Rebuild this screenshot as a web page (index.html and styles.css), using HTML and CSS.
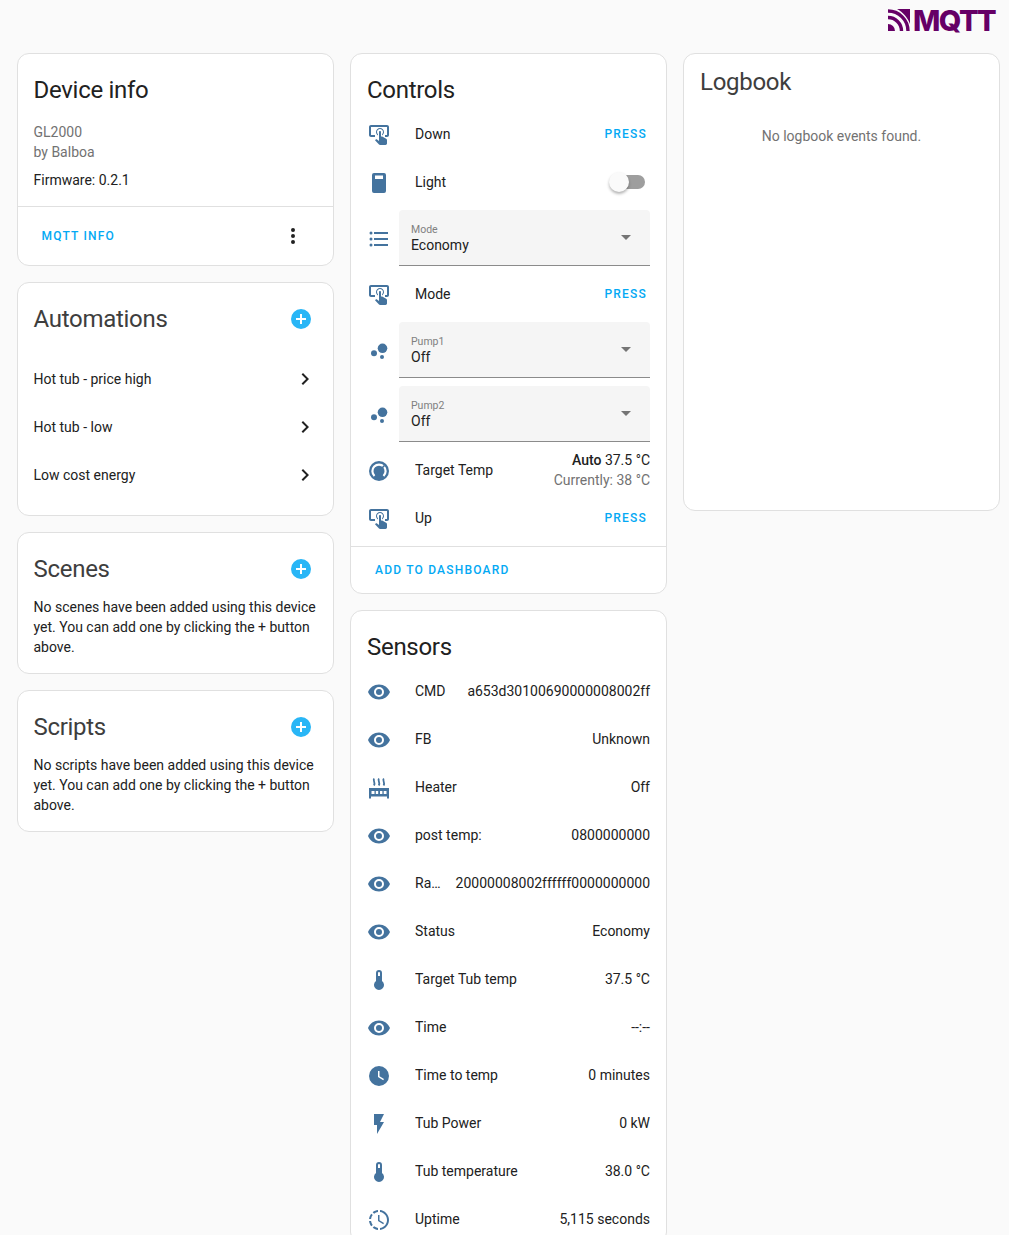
FILE: index.html
```html
<!DOCTYPE html>
<html lang="en">
<head>
<meta charset="utf-8">
<title>Device</title>
<link rel="stylesheet" href="styles.css">
</head>
<body>
<svg class="defs" width="0" height="0" aria-hidden="true">
  <symbol id="i-tap" viewBox="0 0 24 24"><path d="M13 5C15.21 5 17 6.79 17 9C17 10.5 16.2 11.77 15 12.46V11.24C15.61 10.69 16 9.89 16 9C16 7.34 14.66 6 13 6S10 7.34 10 9C10 9.89 10.39 10.69 11 11.24V12.46C9.8 11.77 9 10.5 9 9C9 6.79 10.79 5 13 5M20 20.5C19.97 21.32 19.32 21.97 18.5 22H13C12.62 22 12.26 21.85 12 21.57L8 17.37L8.74 16.6C8.93 16.39 9.2 16.28 9.5 16.28H9.7L12 18V9C12 8.45 12.45 8 13 8S14 8.45 14 9V13.47L15.21 13.6L19.15 15.79C19.68 16.03 20 16.56 20 17.14V20.5M20 2H4C2.9 2 2 2.9 2 4V12C2 13.11 2.9 14 4 14H8V12L4 12L4 4H20L20 12H18V14H20V13.96L20.04 14C21.13 14 22 13.09 22 12V4C22 2.9 21.11 2 20 2Z"/></symbol>
  <symbol id="i-switch" viewBox="0 0 24 24"><path fill-rule="evenodd" d="M7 2H17A2 2 0 0 1 19 4V20A2 2 0 0 1 17 22H7A2 2 0 0 1 5 20V4A2 2 0 0 1 7 2M8 4.5V8H16V4.5Z"/></symbol>
  <symbol id="i-list" viewBox="0 0 24 24"><path d="M7,5H21V7H7V5M7,13V11H21V13H7M4,4.5A1.5,1.5 0 0,1 5.5,6A1.5,1.5 0 0,1 4,7.5A1.5,1.5 0 0,1 2.5,6A1.5,1.5 0 0,1 4,4.5M4,10.5A1.5,1.5 0 0,1 5.5,12A1.5,1.5 0 0,1 4,13.5A1.5,1.5 0 0,1 2.5,12A1.5,1.5 0 0,1 4,10.5M7,19V17H21V19H7M4,16.5A1.5,1.5 0 0,1 5.5,18A1.5,1.5 0 0,1 4,19.5A1.5,1.5 0 0,1 2.5,18A1.5,1.5 0 0,1 4,16.5Z"/></symbol>
  <symbol id="i-bubbles" viewBox="0 0 24 24"><circle cx="15.5" cy="9.3" r="4.8"/><circle cx="7" cy="14.3" r="3"/><circle cx="15" cy="18" r="2"/></symbol>
  <symbol id="i-thermostat" viewBox="0 0 24 24"><circle cx="12" cy="12" r="10"/><path fill="none" stroke="#fff" stroke-width="2.2" d="M7.5 17A6.6 6.6 0 1 1 16.5 17"/><path fill="none" stroke="currentColor" stroke-width="1.6" d="M13 11L17.5 6.5"/></symbol>
  <symbol id="i-eye" viewBox="0 0 24 24"><path d="M12,9A3,3 0 0,0 9,12A3,3 0 0,0 12,15A3,3 0 0,0 15,12A3,3 0 0,0 12,9M12,17A5,5 0 0,1 7,12A5,5 0 0,1 12,7A5,5 0 0,1 17,12A5,5 0 0,1 12,17M12,4.5C7,4.5 2.73,7.61 1,12C2.73,16.39 7,19.5 12,19.5C17,19.5 21.27,16.39 23,12C21.27,7.61 17,4.5 12,4.5Z"/></symbol>
  <symbol id="i-radiator" viewBox="0 0 24 24"><path fill="none" stroke="#44739e" stroke-width="1.8" d="M7.2 2.5C5.4 4.5 8.8 6 7 9.5M12 2.5C10.2 4.5 13.6 6 11.8 9.5M16.8 2.5C15 4.5 18.4 6 16.6 9.5"/><path fill-rule="evenodd" d="M2 12H22V22.5H20V20.5H4V22.5H2ZM4.5 15V18H7.5V15ZM8.8 15V18H11.2V15ZM13 15V18H15.4V15ZM16.7 15V18H19.5V15Z"/></symbol>
  <symbol id="i-thermometer" viewBox="0 0 24 24"><path d="M15 13V5A3 3 0 0 0 9 5V13A5 5 0 1 0 15 13M12 4A1 1 0 0 1 13 5V8H11V5A1 1 0 0 1 12 4Z"/></symbol>
  <symbol id="i-clock" viewBox="0 0 24 24"><path d="M12,2A10,10 0 0,0 2,12A10,10 0 0,0 12,22A10,10 0 0,0 22,12A10,10 0 0,0 12,2M16.2,16.2L11,13V7H12.5V12.2L17,14.9L16.2,16.2Z"/></symbol>
  <symbol id="i-flash" viewBox="0 0 24 24"><path d="M7,2V13H10V22L17,10H13L17,2H7Z"/></symbol>
  <symbol id="i-progress" viewBox="0 0 24 24"><path d="M13,2.03V2.05L13,4.05C17.39,4.59 20.5,8.58 19.96,12.97C19.5,16.61 16.64,19.5 13,19.93V21.93C18.5,21.38 22.5,16.5 21.95,11C21.5,6.25 17.73,2.5 13,2.03M11,2.06C9.05,2.25 7.19,3 5.67,4.26L7.1,5.74C8.22,4.84 9.57,4.26 11,4.06V2.06M4.26,5.67C3,7.19 2.25,9.04 2.05,11H4.05C4.24,9.58 4.8,8.23 5.69,7.1L4.26,5.67M2.06,13C2.26,14.96 3.03,16.81 4.27,18.33L5.69,16.9C4.81,15.77 4.24,14.42 4.06,13H2.06M7.1,18.37L5.67,19.74C7.18,21 9.04,21.79 11,22V20C9.58,19.82 8.23,19.25 7.1,18.37M12.5,7V12.25L17,14.92L16.25,16.15L11,13V7H12.5Z"/></symbol>
  <symbol id="i-chevron" viewBox="0 0 24 24"><path d="M8.59,16.58L13.17,12L8.59,7.41L10,6L16,12L10,18L8.59,16.58Z"/></symbol>
  <symbol id="i-dots" viewBox="0 0 24 24"><path d="M12,16A2,2 0 0,1 14,18A2,2 0 0,1 12,20A2,2 0 0,1 10,18A2,2 0 0,1 12,16M12,10A2,2 0 0,1 14,12A2,2 0 0,1 12,14A2,2 0 0,1 10,12A2,2 0 0,1 12,10M12,4A2,2 0 0,1 14,6A2,2 0 0,1 12,8A2,2 0 0,1 10,6A2,2 0 0,1 12,4Z"/></symbol>
  <symbol id="i-plus" viewBox="0 0 24 24"><path d="M17,13H13V17H11V13H7V11H11V7H13V11H17M12,2A10,10 0 0,0 2,12A10,10 0 0,0 12,22A10,10 0 0,0 22,12A10,10 0 0,0 12,2Z"/></symbol>
  <symbol id="i-caret" viewBox="0 0 24 24"><path d="M7 10L12 15L17 10Z"/></symbol>
</svg>

<header class="topbar">
  <div class="logo">
    <svg class="logo-mark" viewBox="0 0 22 22" aria-hidden="true">
      <path d="M0 15A7 7 0 0 1 7 22H0Z"/>
      <path class="arc" stroke-width="3.4" d="M0 8.5A13.5 13.5 0 0 1 13.5 22"/>
      <path class="arc" stroke-width="3.4" d="M0 2A20 20 0 0 1 20 22"/>
      <path d="M9 0H22V15C19.5 8.5 15 3.2 9 0Z"/>
    </svg>
    <span class="logo-text">MQTT</span>
  </div>
</header>

<main class="columns">
  <div class="column">
    <section class="card">
      <h1 class="card-title">Device info</h1>
      <div class="device-body">
        <div class="muted">GL2000</div>
        <div class="muted">by Balboa</div>
        <div class="firmware">Firmware: 0.2.1</div>
      </div>
      <div class="actions actions-device">
        <a class="link">MQTT INFO</a>
        <svg class="dots"><use href="#i-dots"/></svg>
      </div>
    </section>

    <section class="card automations">
      <div class="title-row">
        <h1 class="card-title soft">Automations</h1>
        <svg class="plus"><use href="#i-plus"/></svg>
      </div>
      <div class="nav-list">
        <div class="nav-row"><span>Hot tub - price high</span><svg class="chevron"><use href="#i-chevron"/></svg></div>
        <div class="nav-row"><span>Hot tub - low</span><svg class="chevron"><use href="#i-chevron"/></svg></div>
        <div class="nav-row"><span>Low cost energy</span><svg class="chevron"><use href="#i-chevron"/></svg></div>
      </div>
    </section>

    <section class="card">
      <div class="title-row">
        <h1 class="card-title soft">Scenes</h1>
        <svg class="plus"><use href="#i-plus"/></svg>
      </div>
      <p class="note">No scenes have been added using this device yet. You can add one by clicking the + button above.</p>
    </section>

    <section class="card">
      <div class="title-row">
        <h1 class="card-title soft">Scripts</h1>
        <svg class="plus"><use href="#i-plus"/></svg>
      </div>
      <p class="note">No scripts have been added using this device yet. You can add one by clicking the + button above.</p>
    </section>
  </div>

  <div class="column">
    <section class="card">
      <h1 class="card-title">Controls</h1>
      <div class="entities">
        <div class="row"><svg class="icon"><use href="#i-tap"/></svg><span class="name">Down</span><a class="press">PRESS</a></div>
        <div class="row"><svg class="icon"><use href="#i-switch"/></svg><span class="name">Light</span><span class="toggle"><span class="track"></span><span class="thumb"></span></span></div>
        <div class="select-row"><svg class="icon"><use href="#i-list"/></svg>
          <div class="select"><div class="select-text"><span class="select-label">Mode</span><span class="select-value">Economy</span></div><svg class="caret"><use href="#i-caret"/></svg></div>
        </div>
        <div class="row"><svg class="icon"><use href="#i-tap"/></svg><span class="name">Mode</span><a class="press">PRESS</a></div>
        <div class="select-row"><svg class="icon"><use href="#i-bubbles"/></svg>
          <div class="select"><div class="select-text"><span class="select-label">Pump1</span><span class="select-value">Off</span></div><svg class="caret"><use href="#i-caret"/></svg></div>
        </div>
        <div class="select-row"><svg class="icon"><use href="#i-bubbles"/></svg>
          <div class="select"><div class="select-text"><span class="select-label">Pump2</span><span class="select-value">Off</span></div><svg class="caret"><use href="#i-caret"/></svg></div>
        </div>
        <div class="row"><svg class="icon"><use href="#i-thermostat"/></svg><span class="name">Target Temp</span>
          <div class="climate"><div><b>Auto</b> 37.5 °C</div><div class="current">Currently: 38 °C</div></div>
        </div>
        <div class="row"><svg class="icon"><use href="#i-tap"/></svg><span class="name">Up</span><a class="press">PRESS</a></div>
      </div>
      <div class="actions actions-controls"><a class="link">ADD TO DASHBOARD</a></div>
    </section>

    <section class="card">
      <h1 class="card-title">Sensors</h1>
      <div class="entities sensors">
        <div class="row"><svg class="icon"><use href="#i-eye"/></svg><span class="name">CMD</span><span class="value">a653d30100690000008002ff</span></div>
        <div class="row"><svg class="icon"><use href="#i-eye"/></svg><span class="name">FB</span><span class="value">Unknown</span></div>
        <div class="row"><svg class="icon"><use href="#i-radiator"/></svg><span class="name">Heater</span><span class="value">Off</span></div>
        <div class="row"><svg class="icon"><use href="#i-eye"/></svg><span class="name">post temp:</span><span class="value">0800000000</span></div>
        <div class="row"><svg class="icon"><use href="#i-eye"/></svg><span class="name">Ra…</span><span class="value">20000008002ffffff0000000000</span></div>
        <div class="row"><svg class="icon"><use href="#i-eye"/></svg><span class="name">Status</span><span class="value">Economy</span></div>
        <div class="row"><svg class="icon"><use href="#i-thermometer"/></svg><span class="name">Target Tub temp</span><span class="value">37.5 °C</span></div>
        <div class="row"><svg class="icon"><use href="#i-eye"/></svg><span class="name">Time</span><span class="value">--:--</span></div>
        <div class="row"><svg class="icon"><use href="#i-clock"/></svg><span class="name">Time to temp</span><span class="value">0 minutes</span></div>
        <div class="row"><svg class="icon"><use href="#i-flash"/></svg><span class="name">Tub Power</span><span class="value">0 kW</span></div>
        <div class="row"><svg class="icon"><use href="#i-thermometer"/></svg><span class="name">Tub temperature</span><span class="value">38.0 °C</span></div>
        <div class="row"><svg class="icon"><use href="#i-progress"/></svg><span class="name">Uptime</span><span class="value">5,115 seconds</span></div>
      </div>
    </section>
  </div>

  <div class="column">
    <section class="card logbook">
      <h1 class="card-title soft">Logbook</h1>
      <p class="empty">No logbook events found.</p>
    </section>
  </div>
</main>
</body>
</html>
```

FILE: styles.css
```css
* { box-sizing: border-box; }
html, body { margin: 0; height: 100%; }
body {
  height: 100vh;
  overflow: hidden;
  background: #fafafa;
  color: #212121;
  font-family: Roboto, "Liberation Sans", sans-serif;
  font-size: 14px;
  line-height: 20px;
}
.defs { position: absolute; }
svg { display: block; fill: currentColor; flex: none; }

.topbar {
  height: 53px;
  display: flex;
  justify-content: flex-end;
  padding: 9px 14px 0 0;
}
.logo { display: flex; align-items: flex-start; height: 26px; color: #660066; gap: 3.5px; }
.logo-mark { width: 22px; height: 22px; }
.logo-mark .arc { fill: none; stroke: #660066; }
.logo-text {
  font-family: Inter, Roboto, sans-serif;
  font-weight: 800;
  font-size: 29px;
  line-height: 22px;
  letter-spacing: -1.6px;
  margin-top: 1px;
}

.columns {
  display: grid;
  grid-template-columns: 317.5px 317px 317px;
  gap: 16px;
  padding-left: 16.5px;
  align-items: start;
}
.column { display: flex; flex-direction: column; gap: 16px; }

.card {
  background: #fff;
  border: 1px solid #e0e0e0;
  border-radius: 12px;
}
.card-title {
  margin: 0;
  padding: 20px 16px 4px;
  font-size: 24px;
  font-weight: 400;
  line-height: 32px;
  letter-spacing: -0.29px;
}
.card-title.soft { color: #3e3e3e; }
.title-row { display: flex; justify-content: space-between; align-items: flex-start; }
.plus { width: 24px; height: 24px; color: #29b6f6; margin: 24px 20px 0 0; }

.device-body { padding: 12px 16px 16px; }
.muted { color: #727272; }
.firmware { margin-top: 8px; }
.actions { border-top: 1px solid #e0e0e0; display: flex; align-items: center; }
.actions-device { height: 59px; justify-content: space-between; padding: 0 28px 0 24px; }
.actions-controls { height: 47px; margin-top: 4px; padding-left: 24px; }
.link, .press {
  color: #03a9f4;
  font-size: 12px;
  font-weight: 500;
  letter-spacing: 1.2px;
}
.dots { width: 24px; height: 24px; }

.automations { padding-bottom: 16px; }
.nav-list { margin-top: 16px; }
.nav-row { height: 48px; display: flex; align-items: center; justify-content: space-between; padding: 0 16px; }
.chevron { width: 24px; height: 24px; }

.note { margin: 8px 16px 16px; }

.entities { padding: 0 16px; }
.row { height: 48px; display: flex; align-items: center; }
.icon { width: 24px; height: 24px; color: #44739e; margin-top: 2px; }
.name { margin-left: 24px; flex: 1; min-width: 0; white-space: nowrap; overflow: hidden; text-overflow: ellipsis; }
.press { padding-right: 3px; }
.value { white-space: nowrap; margin-left: 12px; }

.toggle { position: relative; width: 36px; height: 14px; margin-right: 5px; }
.track { position: absolute; top: 0; right: 0; bottom: 0; left: 2px; border-radius: 7px; background: #9e9e9e; }
.thumb {
  position: absolute;
  left: 0;
  top: -3px;
  width: 20px;
  height: 20px;
  border-radius: 50%;
  background: #fafafa;
  box-shadow: 0 2px 3px rgba(0,0,0,.3);
}

.select-row { display: flex; align-items: center; height: 64px; }
.select {
  flex: 1;
  height: 56px;
  margin-left: 8px;
  background: #f5f5f5;
  border-bottom: 1px solid #8b8b8b;
  border-radius: 4px 4px 0 0;
  display: flex;
  align-items: center;
  justify-content: space-between;
  padding: 0 12px;
}
.select-text { display: flex; flex-direction: column; padding-top: 2px; }
.select-label { font-size: 10.5px; line-height: 13px; color: #808080; }
.select-value { font-size: 14px; line-height: 20px; margin-top: -1px; }
.caret { width: 24px; height: 24px; color: #757575; margin-top: -1px; }

.climate { text-align: right; line-height: 20px; }
.climate b { font-weight: 500; }
.current { color: #727272; }

.logbook { height: 458px; }
.logbook .card-title { padding-top: 12px; }
.empty { margin: 0; padding-top: 24px; text-align: center; color: #727272; }
```
